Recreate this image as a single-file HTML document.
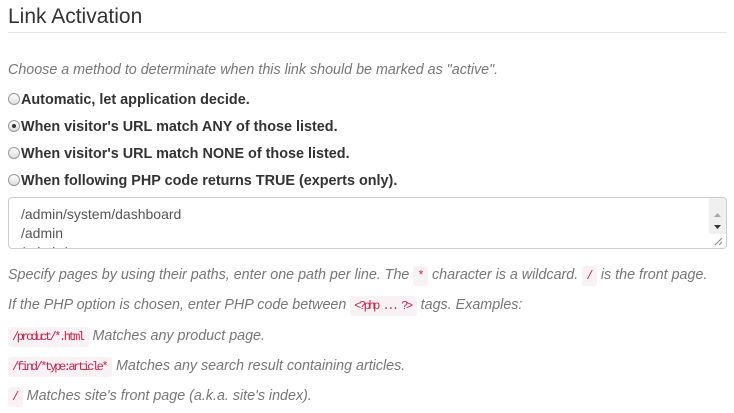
<!DOCTYPE html>
<html><head><style>
body{margin:0;width:734px;height:413px;overflow:hidden;background:#fff;font-family:"Liberation Sans",sans-serif;color:#333;}
.a{position:absolute;white-space:nowrap}
h1{position:absolute;left:8px;top:5px;margin:0;font-size:21px;font-weight:normal;color:#333}
.hr{position:absolute;left:8px;top:32px;width:719px;height:1px;background:#e5e5e5}
.it{font-style:italic;color:#777;font-size:14.3px}
.r{font-weight:bold;font-size:14.4px;color:#333}
.rb{display:inline-block;width:12px;height:12px;border:1px solid #999;border-radius:50%;background:linear-gradient(#fff,#ddd);box-sizing:border-box;vertical-align:-1px;margin-right:1px;position:relative}
.rb.on::after{content:"";position:absolute;left:3px;top:3px;width:4px;height:4px;border-radius:50%;background:#333}
code{font-family:"Liberation Mono",monospace;font-style:normal;font-size:12px;letter-spacing:-2.5px;color:#c7254e;background:#f9f2f4;border-radius:3px;padding:3px 6px 3px 4px}
.ta{position:absolute;left:8px;top:197px;width:719px;height:52px;border:1px solid #ccc;border-radius:4px;box-sizing:border-box;overflow:hidden;font-size:14px;color:#555}
.ta .l{position:absolute;left:12px}
.sb{position:absolute;right:0;top:0;width:17px;height:100%;background:#f0f0f0}
</style></head><body>
<h1>Link Activation</h1>
<div class="hr"></div>
<div class="a it" style="left:8px;top:62px">Choose a method to determinate when this link should be marked as "active".</div>
<div class="a r" style="left:8px;top:92px"><span class="rb"></span>Automatic, let application decide.</div>
<div class="a r" style="left:8px;top:119px"><span class="rb on"></span>When visitor's URL match ANY of those listed.</div>
<div class="a r" style="left:8px;top:146px"><span class="rb"></span>When visitor's URL match NONE of those listed.</div>
<div class="a r" style="left:8px;top:173px"><span class="rb"></span>When following PHP code returns TRUE (experts only).</div>
<div class="ta">
<div class="l" style="top:8px">/admin/system/dashboard</div>
<div class="l" style="top:27px">/admin</div>
<div class="l" style="top:46px">/admin/...</div>
<div class="sb">
<svg width="17" height="52" style="position:absolute;left:0;top:0"><path d="M5 19l3.5-4 3.5 4z" fill="#aaa"/><path d="M5 27l3.5 4 3.5-4z" fill="#333"/><rect x="0" y="36" width="17" height="16" fill="#fff"/><path d="M13 40l-7 7M13 44l-3 3" stroke="#888"/></svg>
</div></div>
<div class="a it" style="left:8px;top:267px">Specify pages by using their paths, enter one path per line. The <code>*</code> character is a wildcard. <code>/</code> is the front page.</div>
<div class="a it" style="left:8px;top:297px">If the PHP option is chosen, enter PHP code between <code>&lt;?php ... ?&gt;</code> tags. Examples:</div>
<div class="a it" style="left:8px;top:328px"><code>/product/*.html</code> Matches any product page.</div>
<div class="a it" style="left:8px;top:358px"><code>/find/*type:article*</code> Matches any search result containing articles.</div>
<div class="a it" style="left:8px;top:388px"><code>/</code> Matches site's front page (a.k.a. site's index).</div>
</body></html>
